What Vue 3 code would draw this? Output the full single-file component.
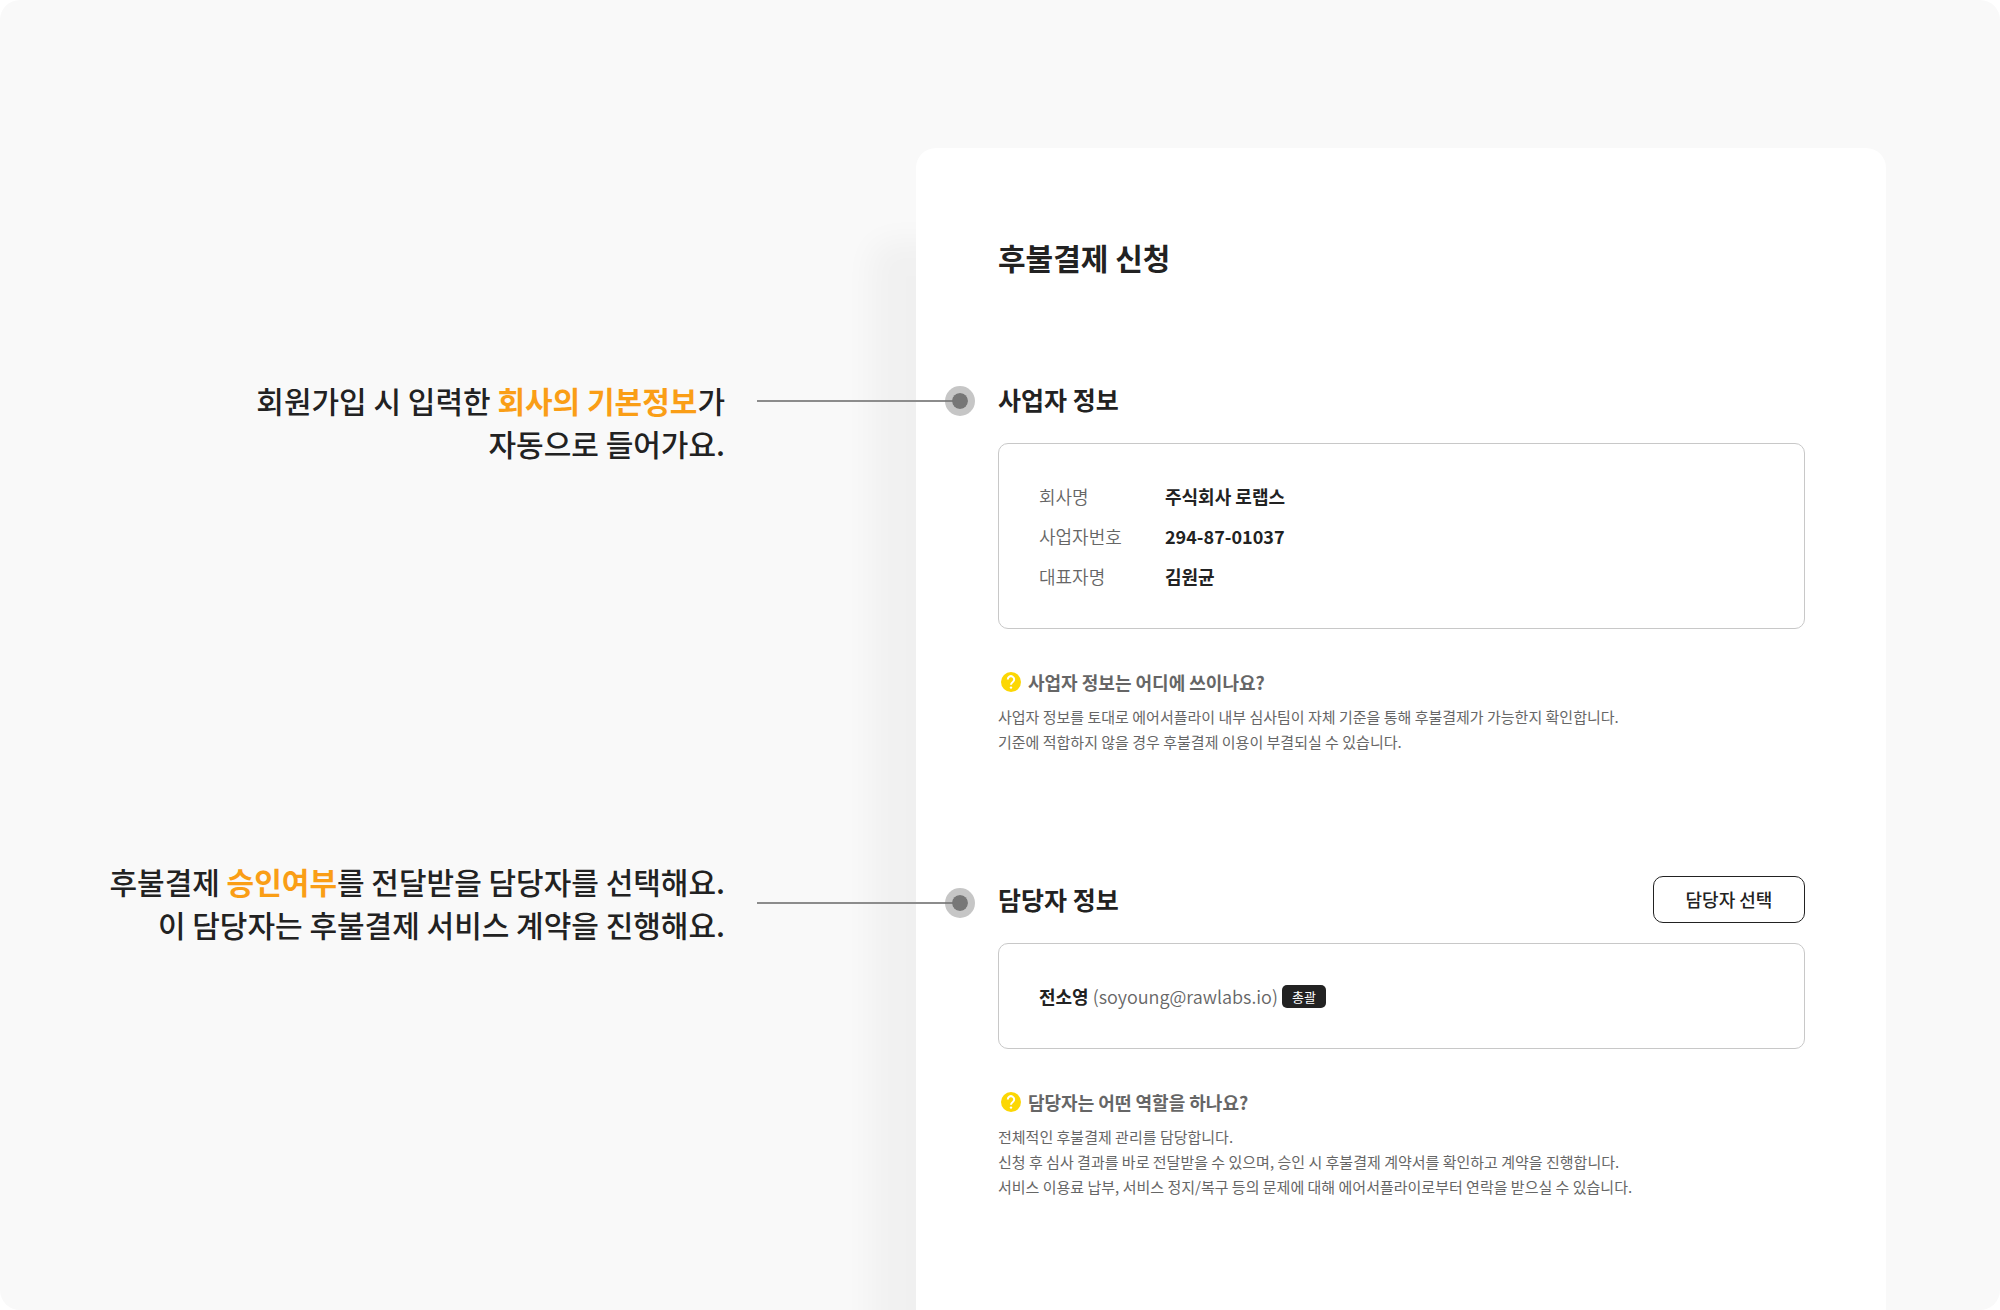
<script setup>
const company = [
  { label: '회사명', value: '주식회사 로랩스' },
  { label: '사업자번호', value: '294-87-01037' },
  { label: '대표자명', value: '김원균' },
]
</script>

<template>
  <main class="page">
    <aside class="guide">
      <div class="callout callout-top">
        <p class="callout-text">
          회원가입 시 입력한 <strong>회사의 기본정보</strong>가<br />자동으로 들어가요.
        </p>
        <span class="connector"><span class="dot"></span></span>
      </div>
      <div class="callout">
        <p class="callout-text">
          후불결제 <strong>승인여부</strong>를 전달받을 담당자를 선택해요.<br />이 담당자는 후불결제 서비스 계약을 진행해요.
        </p>
        <span class="connector"><span class="dot"></span></span>
      </div>
    </aside>

    <article class="card">
      <h1>후불결제 신청</h1>

      <section>
        <header class="section-head"><h2>사업자 정보</h2></header>
        <dl class="box company">
          <div v-for="row in company" :key="row.label" class="row">
            <dt>{{ row.label }}</dt>
            <dd>{{ row.value }}</dd>
          </div>
        </dl>
        <div class="help">
          <h3>
            <svg class="help-icon" viewBox="0 0 20 20" aria-hidden="true">
              <circle cx="10" cy="10" r="10" />
              <path d="M6.800 7.400a3.200 3.200 0 1 1 5 2.600c-1.100.8-1.800 1.300-1.800 2.800" />
              <circle class="point" cx="10" cy="15.600" r="1.200" />
            </svg>
            사업자 정보는 어디에 쓰이나요?
          </h3>
          <p>
            사업자 정보를 토대로 에어서플라이 내부 심사팀이 자체 기준을 통해 후불결제가 가능한지 확인합니다.<br />
            기준에 적합하지 않을 경우 후불결제 이용이 부결되실 수 있습니다.
          </p>
        </div>
      </section>

      <section>
        <header class="section-head">
          <h2>담당자 정보</h2>
          <button type="button" class="select-button">담당자 선택</button>
        </header>
        <div class="box manager">
          <strong>전소영</strong>
          <span class="email">(soyoung@rawlabs.io)</span>
          <span class="badge">총괄</span>
        </div>
        <div class="help">
          <h3>
            <svg class="help-icon" viewBox="0 0 20 20" aria-hidden="true">
              <circle cx="10" cy="10" r="10" />
              <path d="M6.800 7.400a3.200 3.200 0 1 1 5 2.600c-1.100.8-1.800 1.300-1.800 2.800" />
              <circle class="point" cx="10" cy="15.600" r="1.200" />
            </svg>
            담당자는 어떤 역할을 하나요?
          </h3>
          <p>
            전체적인 후불결제 관리를 담당합니다.<br />
            신청 후 심사 결과를 바로 전달받을 수 있으며, 승인 시 후불결제 계약서를 확인하고 계약을 진행합니다.<br />
            서비스 이용료 납부, 서비스 정지/복구 등의 문제에 대해 에어서플라이로부터 연락을 받으실 수 있습니다.
          </p>
        </div>
      </section>
    </article>
  </main>
</template>

<style>
body {
  margin: 0;
  background: #fff;
}
</style>

<style scoped>
.page {
  box-sizing: border-box;
  display: flex;
  min-height: 100vh;
  padding: 148px 114px 0 0;
  overflow: hidden;
  border-radius: 20px;
  background: #f9f9f9;
  color: #222;
  font-family: "Noto Sans CJK KR", sans-serif;
}

h1, h2, h3, p, dl, dd {
  margin: 0;
}

/* The connectors reach into the card, so this column overlaps its edge. */
.guide {
  position: relative;
  z-index: 1;
  flex: 1;
  margin-right: -59px;
  padding-top: 231px;
}

.callout {
  display: flex;
  align-items: center;
  justify-content: flex-end;
  gap: 32px;
}

.callout-top {
  align-items: flex-start;
  margin-bottom: 395px;
}

.callout-text {
  text-align: right;
  font-size: 30px;
  font-weight: 500;
  line-height: 43px;
}

.callout-text strong {
  color: #fa9e16;
  font-weight: 700;
}

.connector {
  display: flex;
  align-items: center;
  justify-content: flex-end;
  width: 218px;
  height: 43px;
  background: linear-gradient(#8c8c8c, #8c8c8c) left center / 200px 2px no-repeat;
}

.dot {
  box-sizing: border-box;
  width: 30px;
  height: 30px;
  border: 7px solid rgba(120, 120, 120, 0.42);
  border-radius: 50%;
  background: #777 padding-box;
}

.card {
  box-sizing: border-box;
  width: 970px;
  padding: 87px 81px 110px 82px;
  border-radius: 20px 20px 0 0;
  background: #fff;
  box-shadow: -46px 92px 30px rgba(0, 0, 0, 0.036);
}

h1 {
  margin-bottom: 96px;
  font-size: 30px;
  font-weight: 700;
  line-height: 44px;
}

section + section {
  margin-top: 121px;
}

.section-head {
  display: flex;
  align-items: center;
  justify-content: space-between;
  height: 48px;
  margin-bottom: 20px;
}

h2 {
  font-size: 25px;
  font-weight: 700;
  line-height: 36px;
}

.select-button {
  width: 152px;
  height: 47px;
  padding: 0;
  border: 1px solid #222;
  border-radius: 10px;
  background: #fff;
  color: #222;
  font-family: inherit;
  font-size: 18px;
  font-weight: 500;
}

.box {
  border: 1px solid #c8c8c8;
  border-radius: 10px;
  font-size: 18px;
}

.company {
  padding: 32px 40px;
}

.row {
  display: flex;
  line-height: 40px;
}

dt {
  width: 126px;
  color: #666;
  font-weight: 350;
}

dd {
  font-weight: 700;
}

.manager {
  display: flex;
  align-items: center;
  gap: 4px;
  padding: 32px 40px;
  line-height: 40px;
}

.email {
  color: #666;
  font-weight: 350;
}

.badge {
  padding: 0 10px;
  border-radius: 5px;
  background: #222;
  color: #fff;
  font-size: 13px;
  line-height: 23px;
}

.help {
  margin-top: 39px;
  color: #666;
}

h3 {
  display: flex;
  align-items: center;
  gap: 7px;
  margin-bottom: 8px;
  padding-left: 3px;
  font-size: 18px;
  font-weight: 700;
  line-height: 28px;
}

.help-icon {
  width: 20px;
  height: 20px;
  fill: #fcd704;
}

.help-icon path {
  fill: none;
  stroke: #fff;
  stroke-width: 2;
}

.help-icon .point {
  fill: #fff;
}

.help p {
  font-size: 15px;
  line-height: 25px;
}
</style>
